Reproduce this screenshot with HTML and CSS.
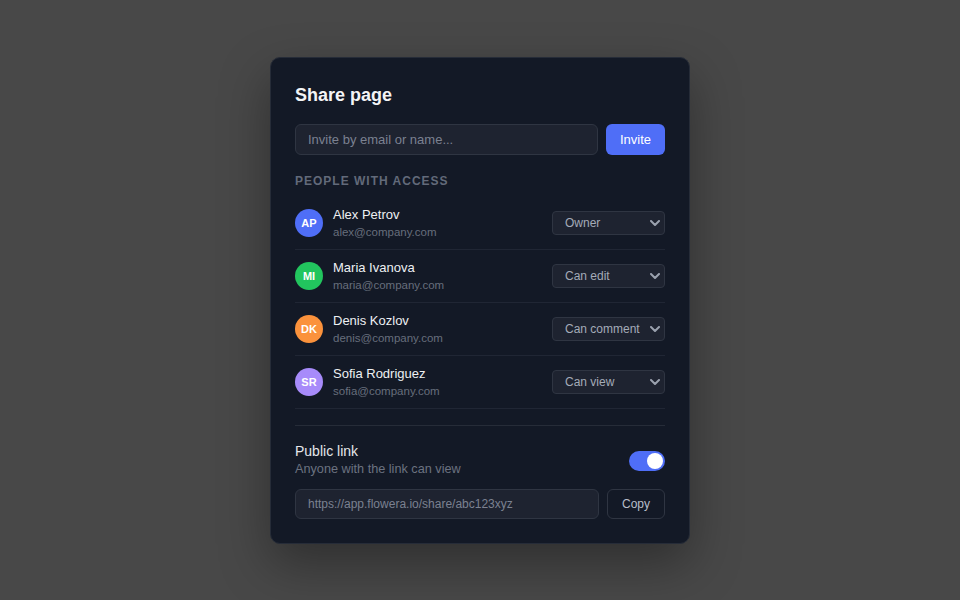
FILE: index.html
```html
<!DOCTYPE html>
<html lang="en">
<head>
    <meta charset="UTF-8" />
    <meta name="viewport" content="width=device-width, initial-scale=1.0"/>
    <title>Share page</title>
    <link rel="stylesheet" href="styles.css">
</head>
<body>

    <div class="share-dialog">
        <h1 class="share-title">Share page</h1>

        <div class="invite-row">
            <input class="field invite-input" type="text" placeholder="Invite by email or name...">
            <button class="btn-primary">Invite</button>
        </div>

        <div class="section-label">People with access</div>

        <ul class="people-list">
            <li class="person">
                <div class="avatar avatar-blue">AP</div>
                <div class="person-info">
                    <div class="person-name">Alex Petrov</div>
                    <div class="person-email">alex@company.com</div>
                </div>
                <div class="role-select">
                    <select><option>Owner</option><option>Can edit</option><option>Can comment</option><option>Can view</option></select>
                    <svg class="chevron" viewBox="0 0 10 6" width="10" height="6"><path d="M1 1l4 4 4-4" fill="none" stroke="currentColor" stroke-width="2" stroke-linecap="round" stroke-linejoin="round"/></svg>
                </div>
            </li>
            <li class="person">
                <div class="avatar avatar-green">MI</div>
                <div class="person-info">
                    <div class="person-name">Maria Ivanova</div>
                    <div class="person-email">maria@company.com</div>
                </div>
                <div class="role-select">
                    <select><option>Can edit</option><option>Can comment</option><option>Can view</option></select>
                    <svg class="chevron" viewBox="0 0 10 6" width="10" height="6"><path d="M1 1l4 4 4-4" fill="none" stroke="currentColor" stroke-width="2" stroke-linecap="round" stroke-linejoin="round"/></svg>
                </div>
            </li>
            <li class="person">
                <div class="avatar avatar-orange">DK</div>
                <div class="person-info">
                    <div class="person-name">Denis Kozlov</div>
                    <div class="person-email">denis@company.com</div>
                </div>
                <div class="role-select">
                    <select><option>Can comment</option><option>Can edit</option><option>Can view</option></select>
                    <svg class="chevron" viewBox="0 0 10 6" width="10" height="6"><path d="M1 1l4 4 4-4" fill="none" stroke="currentColor" stroke-width="2" stroke-linecap="round" stroke-linejoin="round"/></svg>
                </div>
            </li>
            <li class="person">
                <div class="avatar avatar-purple">SR</div>
                <div class="person-info">
                    <div class="person-name">Sofia Rodriguez</div>
                    <div class="person-email">sofia@company.com</div>
                </div>
                <div class="role-select">
                    <select><option>Can view</option><option>Can comment</option><option>Can edit</option></select>
                    <svg class="chevron" viewBox="0 0 10 6" width="10" height="6"><path d="M1 1l4 4 4-4" fill="none" stroke="currentColor" stroke-width="2" stroke-linecap="round" stroke-linejoin="round"/></svg>
                </div>
            </li>
        </ul>

        <div class="public-section">
            <div class="public-head">
                <div>
                    <div class="public-title">Public link</div>
                    <div class="public-desc">Anyone with the link can view</div>
                </div>
                <div class="toggle on"><span class="knob"></span></div>
            </div>
            <div class="link-row">
                <input class="field link-input" type="text" value="https://app.flowera.io/share/abc123xyz" readonly>
                <button class="btn-ghost">Copy</button>
            </div>
        </div>
    </div>

</body>
</html>
```

FILE: styles.css
```css
* {
    box-sizing: border-box;
}

body {
    margin: 0;
    height: 100vh;
    background: #484848;
    display: flex;
    justify-content: center;
    align-items: center;
    font-family: "Liberation Sans", Arial, sans-serif;
    color: #e5e7eb;
}

.share-dialog {
    width: 420px;
    padding: 23px 24px 24px;
    background: #131926;
    border: 1px solid #262c38;
    border-radius: 10px;
    box-shadow: 0 20px 50px rgba(0, 0, 0, 0.35);
}

.share-title {
    margin: 0 0 15px;
    font-size: 18px;
    line-height: 28px;
    font-weight: 700;
    color: #f3f4f6;
}

.invite-row,
.link-row {
    display: flex;
    gap: 8px;
}

.field {
    flex: 1;
    min-width: 0;
    height: 31px;
    padding: 0 12px;
    background: #1e2330;
    border: 1px solid #2f3542;
    border-radius: 6px;
    font-family: inherit;
    font-size: 13px;
    color: #e5e7eb;
    outline: none;
}

.field::placeholder {
    color: #7b8190;
}

.btn-primary {
    width: 59px;
    height: 31px;
    border: none;
    border-radius: 6px;
    background: #4f6ef7;
    color: #ffffff;
    font-family: inherit;
    font-size: 13px;
    font-weight: 500;
}

/* lista de personas */
.section-label {
    margin-top: 19px;
    font-size: 12px;
    line-height: 14px;
    font-weight: 700;
    letter-spacing: 1px;
    text-transform: uppercase;
    color: #626a7a;
}

.people-list {
    list-style: none;
    margin: 9px 0 0;
    padding: 0;
}

.person {
    display: flex;
    align-items: center;
    gap: 10px;
    padding: 10px 0;
    border-bottom: 1px solid #202634;
}

.avatar {
    width: 28px;
    height: 28px;
    border-radius: 50%;
    display: flex;
    justify-content: center;
    align-items: center;
    font-size: 11px;
    font-weight: 700;
    color: #ffffff;
    flex-shrink: 0;
}

.avatar-blue { background: #4f6ef7; }
.avatar-green { background: #22c55e; }
.avatar-orange { background: #fb923c; }
.avatar-purple { background: #a78bfa; }

.person-info {
    flex: 1;
    min-width: 0;
}

.person-name {
    font-size: 13px;
    line-height: 16px;
    font-weight: 500;
    color: #eef0f3;
}

.person-email {
    margin-top: 2px;
    font-size: 11.5px;
    line-height: 14px;
    color: #676e7c;
}

.role-select {
    position: relative;
    width: 113px;
    height: 24px;
}

.role-select select {
    appearance: none;
    -webkit-appearance: none;
    width: 100%;
    height: 100%;
    padding: 0 20px 0 12px;
    background: #1e2330;
    border: 1px solid #2f3542;
    border-radius: 4px;
    font-family: inherit;
    font-size: 12px;
    color: #a4abb8;
    outline: none;
}

.role-select .chevron {
    position: absolute;
    right: 5px;
    top: 9px;
    color: #9aa1ae;
    pointer-events: none;
}

/* enlace publico */
.public-section {
    margin-top: 16px;
    padding-top: 16px;
    border-top: 1px solid #262c38;
}

.public-head {
    display: flex;
    justify-content: space-between;
    align-items: center;
}

.public-title {
    font-size: 14px;
    line-height: 18px;
    color: #e5e7eb;
}

.public-desc {
    font-size: 12.7px;
    line-height: 18px;
    color: #6b7280;
}

.toggle {
    position: relative;
    width: 36px;
    height: 20px;
    border-radius: 10px;
    background: #3a4150;
    margin-top: 2px;
}

.toggle.on {
    background: #4f6ef7;
}

.toggle .knob {
    position: absolute;
    top: 2px;
    left: 2px;
    width: 16px;
    height: 16px;
    border-radius: 50%;
    background: #ffffff;
}

.toggle.on .knob {
    left: 18px;
}

.link-row {
    margin-top: 11px;
}

.link-input {
    height: 30px;
    font-size: 12px;
    color: #7b8190;
}

.btn-ghost {
    width: 58px;
    height: 30px;
    background: transparent;
    border: 1px solid #2f3542;
    border-radius: 6px;
    color: #b8bec9;
    font-family: inherit;
    font-size: 12px;
}
```
